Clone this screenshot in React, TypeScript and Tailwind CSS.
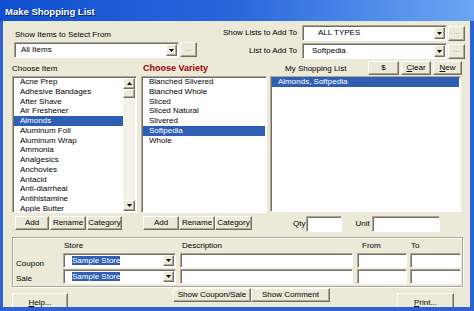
import React from 'react';

const raised =
  'border border-t-white border-l-white border-r-[#716f64] border-b-[#716f64] shadow-[inset_-1px_-1px_0_#aca899] bg-[#ece9d8]';
const sunken =
  'border border-t-[#aca899] border-l-[#aca899] border-r-white border-b-white shadow-[inset_1px_1px_0_#716f64] bg-white';

function Btn({ className = '', children }: { className?: string; children?: React.ReactNode }) {
  return (
    <div className={`${raised} flex items-center justify-center text-black whitespace-nowrap ${className}`}>
      {children}
    </div>
  );
}

function Arrow({ up }: { up?: boolean }) {
  return (
    <svg width="5" height="3" viewBox="0 0 5 3">
      <polygon points={up ? '0,3 5,3 2.5,0' : '0,0 5,0 2.5,3'} fill="#000" />
    </svg>
  );
}

function Dots() {
  return (
    <Btn className="w-[17px] h-[15px]">
      <span className="text-[#9d9b90] [text-shadow:1px_1px_0_#fff] leading-none -mt-[2px]">...</span>
    </Btn>
  );
}

function Combo({
  className = '',
  text,
  pad = 'pl-[5px]',
  selected,
}: {
  className?: string;
  text: string;
  pad?: string;
  selected?: boolean;
}) {
  return (
    <div className={`${sunken} flex items-stretch p-[1px] ${className}`}>
      <div className={`flex-1 flex items-center whitespace-nowrap overflow-hidden ${pad}`}>
        {selected ? <span className="bg-[#2f5fb3] text-white leading-[9px]">{text}</span> : text}
      </div>
      <Btn className="w-[11px]">
        <Arrow />
      </Btn>
    </div>
  );
}

function Field({ className = '' }: { className?: string }) {
  return <div className={`${sunken} ${className}`} />;
}

function Scrollbar() {
  return (
    <div className="w-[12px] flex flex-col bg-[#f3f1ea]">
      <Btn className="h-[11px]">
        <Arrow up />
      </Btn>
      <Btn className="h-[9px]" />
      <div className="flex-1" />
      <Btn className="h-[11px]">
        <Arrow />
      </Btn>
    </div>
  );
}

function ListBox({
  items,
  selected,
  className = '',
  scroll,
}: {
  items: string[];
  selected?: string;
  className?: string;
  scroll?: boolean;
}) {
  return (
    <div className={`${sunken} flex p-[1px] overflow-hidden ${className}`}>
      <div className="flex-1 flex flex-col -mt-[1px]">
        {items.map((it) => (
          <div
            key={it}
            className={`h-[9.75px] shrink-0 leading-[9.75px] pl-[6px] whitespace-nowrap ${
              it === selected ? 'bg-[#2f5fb3] text-white' : ''
            }`}
          >
            {it}
          </div>
        ))}
      </div>
      {scroll && <Scrollbar />}
    </div>
  );
}

const itemList = [
  'Acne Prep',
  'Adhesive Bandages',
  'After Shave',
  'Air Freshener',
  'Almonds',
  'Aluminum Foil',
  'Aluminum Wrap',
  'Ammonia',
  'Analgesics',
  'Anchovies',
  'Antacid',
  'Anti-diarrheal',
  'Antihistamine',
  'Apple Butter',
];

const varieties = [
  'Blanched Slivered',
  'Blanched Whole',
  'Sliced',
  'Sliced Natural',
  'Slivered',
  'Softpedia',
  'Whole',
];

export default function App() {
  return (
    <div className="w-[474px] h-[311px] overflow-hidden bg-[#2d62d3] flex flex-col font-['Liberation_Sans',Arial,sans-serif] text-[8px] text-black">
      {/* title bar */}
      <div className="h-[21px] shrink-0 flex items-center pl-[5px] pt-[3px] bg-linear-to-r from-[#0f4fcf] via-[#2a67dd] to-[#6aa6f3]">
        <span className="text-white font-bold text-[9.5px] [text-shadow:1px_1px_0_#0a246a]">Make Shopping List</span>
      </div>

      <div className="ml-[3px] mr-[4px] mb-[4px] flex-1 bg-[#ece9d8] overflow-hidden flex flex-col">
        {/* top selectors */}
        <div className="flex h-[40px] shrink-0">
          <div className="ml-[11px] w-[184px] pt-[8px] flex flex-col">
            <div className="h-[12px] leading-[12px] pl-[1px]">Show Items to Select From</div>
            <div className="mt-[1px] flex items-start">
              <Combo className="w-[165px] h-[16px]" text="All Items" />
              <div className="ml-[1px]">
                <Dots />
              </div>
            </div>
          </div>
          <div className="flex-1 pt-[4px] flex flex-col gap-[2px]">
            <div className="h-[16px] flex items-center">
              <div className="flex-1 text-right pr-[5px]">Show Lists to Add To</div>
              <Combo className="w-[145px] h-[16px]" text="ALL TYPES" pad="pl-[14px]" />
              <div className="ml-[1px] mr-[5px]">
                <Dots />
              </div>
            </div>
            <div className="h-[16px] flex items-center">
              <div className="flex-1 text-right pr-[5px]">List to Add To</div>
              <Combo className="w-[145px] h-[16px]" text="Softpedia" pad="pl-[8px]" />
              <div className="ml-[1px] mr-[5px]">
                <Dots />
              </div>
            </div>
          </div>
        </div>

        {/* three lists */}
        <div className="flex pl-[9px] shrink-0">
          <div className="w-[125px] flex flex-col">
            <div className="h-[15px] flex items-center">Choose Item</div>
            <ListBox className="h-[137px]" items={itemList} selected="Almonds" scroll />
            <div className="mt-[3px] pl-[3px] flex">
              <Btn className="w-[34px] h-[14px]">Add</Btn>
              <Btn className="ml-[1px] w-[36px] h-[14px]">Rename</Btn>
              <Btn className="ml-[1px] w-[35px] h-[14px]">Category</Btn>
            </div>
          </div>

          <div className="ml-[4px] w-[126px] flex flex-col">
            <div className="h-[15px] flex items-center pl-[2px] font-bold text-[9px] text-[#a00000]">Choose Variety</div>
            <ListBox className="h-[137px]" items={varieties} selected="Softpedia" />
            <div className="mt-[3px] pl-[2px] flex">
              <Btn className="w-[36px] h-[14px]">Add</Btn>
              <Btn className="w-[36px] h-[14px]">Rename</Btn>
              <Btn className="w-[37px] h-[14px]">Category</Btn>
            </div>
          </div>

          <div className="ml-[3px] w-[192px] flex flex-col">
            <div className="h-[15px] flex items-start">
              <div className="pl-[15px] self-center">My Shopping List</div>
              <Btn className="ml-auto w-[31px] h-[14px]">$</Btn>
              <Btn className="ml-[2px] w-[30px] h-[14px]">
                <span>
                  <span className="underline">C</span>lear
                </span>
              </Btn>
              <Btn className="ml-[2px] w-[29px] h-[14px]">
                <span>
                  <span className="underline">N</span>ew
                </span>
              </Btn>
            </div>
            <ListBox className="h-[136px] w-[191px]" items={['Almonds, Softpedia']} selected="Almonds, Softpedia" />
            <div className="mt-[4px] h-[16px] flex items-center">
              <span className="pl-[23px]">Qty</span>
              <Field className="ml-[1px] w-[36px] h-[16px]" />
              <span className="ml-[13px]">Unit</span>
              <Field className="ml-[2px] w-[68px] h-[16px]" />
            </div>
          </div>
        </div>

        {/* coupon / sale group */}
        <div className="ml-[9px] mt-[5px] w-[451px] h-[50px] shrink-0 border border-[#aca899] shadow-[inset_1px_1px_0_#fff,1px_1px_0_#fff] flex flex-col">
          <div className="h-[15px] flex items-center">
            <div className="w-[50px]" />
            <div className="w-[113px] pl-[1px]">Store</div>
            <div className="ml-[4px] w-[173px] pl-[2px]">Description</div>
            <div className="ml-[4px] w-[50px] pl-[5px]">From</div>
            <div className="ml-[3px] w-[51px] pl-[1px]">To</div>
          </div>
          <div className="h-[15px] flex">
            <div className="w-[50px] pl-[3px] flex items-end leading-[9px]">Coupon</div>
            <Combo className="w-[113px] h-[15px]" text="Sample Store" pad="pl-[7px]" selected />
            <Field className="ml-[4px] w-[173px] h-[15px]" />
            <Field className="ml-[4px] w-[50px] h-[15px]" />
            <Field className="ml-[3px] w-[51px] h-[15px]" />
          </div>
          <div className="mt-[1px] h-[15px] flex">
            <div className="w-[50px] pl-[3px] flex items-end leading-[9px] -translate-y-[1px]">Sale</div>
            <Combo className="w-[113px] h-[15px]" text="Sample Store" pad="pl-[7px]" selected />
            <Field className="ml-[4px] w-[173px] h-[15px]" />
            <Field className="ml-[4px] w-[50px] h-[15px]" />
            <Field className="ml-[3px] w-[51px] h-[15px]" />
          </div>
        </div>

        {/* bottom buttons */}
        <div className="flex items-start h-[24px] shrink-0">
          <Btn className="ml-[9px] mt-[6px] w-[56px] h-[20px]">
            <span>
              <span className="underline">H</span>elp...
            </span>
          </Btn>
          <Btn className="ml-[105px] mt-[1px] w-[78px] h-[14px]">Show Coupon/Sale</Btn>
          <Btn className="w-[79px] h-[14px] mt-[1px]">Show Comment</Btn>
          <Btn className="ml-[67px] mt-[6px] w-[57px] h-[20px]">
            <span>
              <span className="underline">P</span>rint...
            </span>
          </Btn>
        </div>
      </div>
    </div>
  );
}
